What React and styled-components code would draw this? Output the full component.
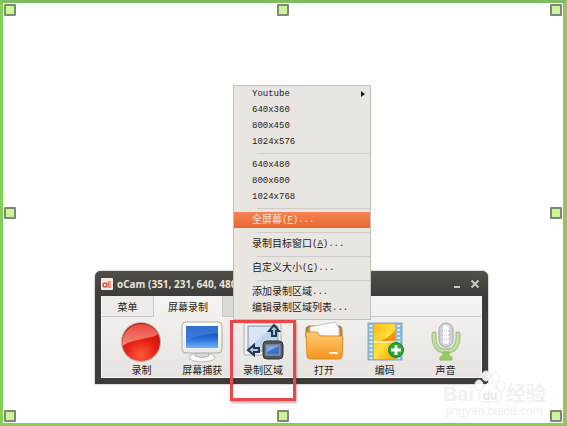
import styled, { createGlobalStyle, css } from "styled-components";

const menuGroups = [
  {
    items: [
      { size: "Youtube", submenu: true },
      { size: "640x360" },
      { size: "800x450" },
      { size: "1024x576" },
    ],
  },
  { items: [{ size: "640x480" }, { size: "800x600" }, { size: "1024x768" }] },
  { items: [{ label: "全屏幕", hotkey: "F", active: true }] },
  { loose: true, items: [{ label: "录制目标窗口", hotkey: "A" }] },
  { loose: true, items: [{ label: "自定义大小", hotkey: "C" }] },
  {
    loose: true,
    items: [{ label: "添加录制区域" }, { label: "编辑录制区域列表" }],
  },
];

const RecordIcon = () => (
  <svg width="42" height="42" viewBox="0 0 42 42">
    <defs>
      <radialGradient id="rec" cx="50%" cy="85%" r="75%">
        <stop offset="0" stopColor="#ff5a38" />
        <stop offset="0.6" stopColor="#e41c12" />
        <stop offset="1" stopColor="#c01410" />
      </radialGradient>
      <linearGradient id="recShine" x1="0" y1="0" x2="0" y2="1">
        <stop offset="0" stopColor="#e84a3e" />
        <stop offset="1" stopColor="#f58a7c" />
      </linearGradient>
    </defs>
    <circle cx="21" cy="21" r="20" fill="#b4b0ac" />
    <circle cx="21" cy="21" r="19" fill="url(#rec)" />
    <path
      d="M2.500 25 A19 19 0 0 1 38 13 C33 17 28 16 22 18 C13 20 8 21 2.500 25Z"
      fill="url(#recShine)"
    />
  </svg>
);

const ScreenIcon = () => (
  <svg width="42" height="42" viewBox="0 0 42 42">
    <defs>
      <linearGradient id="scr" x1="0" y1="0" x2="0" y2="1">
        <stop offset="0" stopColor="#1d57ba" />
        <stop offset="0.5" stopColor="#1d62d0" />
        <stop offset="1" stopColor="#6fb2f6" />
      </linearGradient>
      <linearGradient id="scrFrame" x1="0" y1="0" x2="0" y2="1">
        <stop offset="0" stopColor="#ffffff" />
        <stop offset="1" stopColor="#e8e8e6" />
      </linearGradient>
    </defs>
    <ellipse cx="21" cy="36.500" rx="13" ry="4.500" fill="#f8f8f6" stroke="#bcbdba" />
    <path d="M15 30h12l1 5q-7 3-14 0z" fill="#d8d9d6" stroke="#b4b5b2" />
    <rect x="1" y="1" width="40" height="31" rx="4" fill="url(#scrFrame)" stroke="#a9aaa8" />
    <rect x="5" y="5" width="32" height="22" fill="url(#scr)" />
    <path d="M5 5h32v7q-15 1-32 7z" fill="#6fa5ee" opacity="0.3" />
  </svg>
);

const RegionIcon = () => (
  <svg width="42" height="42" viewBox="0 0 42 42">
    <rect x="2" y="2" width="37" height="32" rx="2" fill="#f1f1ef" stroke="#aeb0b0" />
    <rect x="6" y="5" width="30" height="25" fill="#c0d4ea" stroke="#8e9db0" />
    <path d="M7 6h24L7 26z" fill="#dae6f3" />
    <path
      d="M32 4l5 6h-3v5h-4v-5h-3z"
      fill="#a9c9ea"
      stroke="#22384e"
      strokeWidth="2"
    />
    <path
      d="M6 29l6-5v3h5v4h-5v3z"
      fill="#a9c9ea"
      stroke="#22384e"
      strokeWidth="2"
    />
    <rect x="21" y="20" width="20" height="18" rx="4" fill="#54575a" stroke="#303336" />
    <rect x="24" y="24" width="14" height="10" fill="#3c73c8" stroke="#a2aab2" />
    <path d="M25 25h12l-12 6z" fill="#7ea8e4" />
  </svg>
);

const FolderIcon = () => (
  <svg width="42" height="42" viewBox="0 0 42 42">
    <defs>
      <linearGradient id="fold" x1="0" y1="0" x2="0" y2="1">
        <stop offset="0" stopColor="#ffcb74" />
        <stop offset="1" stopColor="#f6961d" />
      </linearGradient>
    </defs>
    <path d="M3 9q0-4 3-4h30q3 0 3 4v7H3z" fill="#c08a44" stroke="#a9752f" />
    <path d="M7 14V6l25-5 4 6v9z" fill="#fbfbfb" stroke="#c5c5c3" />
    <path
      d="M3 12q0-1 1-1h10l3 4h21q2 0 2 2l-1 18q0 3-3 3H7q-3 0-3-3z"
      fill="url(#fold)"
      stroke="#d98d2b"
    />
    <path d="M26 31h9v2h-9z" fill="#fff3da" />
  </svg>
);

const FilmIcon = () => (
  <svg width="42" height="42" viewBox="0 0 42 42">
    <defs>
      <linearGradient id="film" x1="0" y1="0" x2="1" y2="1">
        <stop offset="0" stopColor="#ffb90f" />
        <stop offset="0.5" stopColor="#ffe03c" />
        <stop offset="1" stopColor="#f9a00c" />
      </linearGradient>
    </defs>
    <rect x="4" y="2" width="34" height="37" fill="#8fb8d9" stroke="#86a8c4" />
    <rect x="10" y="3" width="21" height="35" fill="url(#film)" />
    <path d="M31 10v10H14q10-2 17-10z" fill="#f98f13" />
    <path d="M10 20h21v2H10z" fill="#fff2a0" />
    <path d="M7 4v34M34.500 4v34" stroke="#d4e8f6" strokeWidth="3" strokeDasharray="2 2" />
    <circle cx="32" cy="29" r="7.500" fill="#27a632" stroke="#168322" />
    <path d="M32 24v10M27 29h10" stroke="#ffffff" strokeWidth="3" />
  </svg>
);

const MicIcon = () => (
  <svg width="42" height="42" viewBox="0 0 42 42">
    <path
      d="M9 13q-1 17 12 17t12-17"
      fill="none"
      stroke="#9fba88"
      strokeWidth="5"
      strokeLinecap="round"
    />
    <path
      d="M9 13q-1 17 12 17t12-17"
      fill="none"
      stroke="#c0e09e"
      strokeWidth="3"
      strokeLinecap="round"
    />
    <path d="M18 31h6v4l3 1v3H15v-3l3-1z" fill="#92cf5c" stroke="#8cba66" />
    <rect x="14" y="2" width="14" height="24" rx="7" fill="#d3d4da" stroke="#a4a5ad" />
    <rect x="18" y="4" width="6" height="19" rx="3" fill="#fbfbfd" />
    <path d="M15 10h12M15 14h12M15 18h12" stroke="#b9bbc3" strokeDasharray="1 1" />
  </svg>
);

const tools = [
  { label: "录制", icon: <RecordIcon /> },
  { label: "屏幕捕获", icon: <ScreenIcon /> },
  { label: "录制区域", icon: <RegionIcon /> },
  { label: "打开", icon: <FolderIcon /> },
  { label: "编码", icon: <FilmIcon /> },
  { label: "声音", icon: <MicIcon /> },
];

const RecorderWindow = () => {
  return (
    <Window>
      <TitleBar>
        <svg width="12" height="12" viewBox="0 0 12 12">
          <rect width="12" height="12" rx="1" fill="#f3ebe6" />
          <circle cx="4" cy="7" r="2" fill="none" stroke="#d5503f" strokeWidth="1.500" />
          <path d="M10 4H7.500v5H10M8 6.500h2" fill="none" stroke="#e07b62" strokeWidth="1.500" />
        </svg>
        <Title>oCam (351, 231, 640, 480)</Title>
        <WindowButton aria-label="minimize">
          <svg width="10" height="10" viewBox="0 0 10 10">
            <path d="M2 8h6" stroke="#c9c7c2" strokeWidth="2" />
          </svg>
        </WindowButton>
        <WindowButton aria-label="close">
          <svg width="10" height="10" viewBox="0 0 10 10">
            <path d="M1.500 1.500l7 7M8.500 1.500l-7 7" stroke="#c9c7c2" strokeWidth="2" />
          </svg>
        </WindowButton>
      </TitleBar>
      <WindowBody>
        <TabBar>
          <Tab>菜单</Tab>
          <Tab $active>屏幕录制</Tab>
          <Tab $dim />
          <TabFiller />
        </TabBar>
        <Toolbar>
          {tools.map((tool) => (
            <ToolButton key={tool.label}>
              {tool.icon}
              {tool.label}
            </ToolButton>
          ))}
        </Toolbar>
      </WindowBody>
    </Window>
  );
};

const RegionMenu = () => {
  return (
    <Menu>
      {menuGroups.map((group, i) => (
        <MenuGroup key={i}>
          {i > 0 && <Separator $loose={group.loose} />}
          {group.items.map((item) => (
            <MenuItem key={item.size || item.label} $active={item.active}>
              {item.label}
              <Latin>
                {item.size}
                {item.hotkey && (
                  <>
                    (<u>{item.hotkey}</u>)
                  </>
                )}
                {item.label && "..."}
              </Latin>
              {item.submenu && <Arrow />}
            </MenuItem>
          ))}
        </MenuGroup>
      ))}
    </Menu>
  );
};

const BaiduMark = () => {
  return (
    <Mark>
      <MarkLogo>
        <span>Bai</span>
        <Paw>
          <svg width="32" height="34" viewBox="0 0 32 34">
            <g fill="#ffffff" fillOpacity="0.9" stroke="#ececec">
              <ellipse cx="5" cy="15" rx="4" ry="5" />
              <ellipse cx="12" cy="6" rx="4" ry="5" />
              <ellipse cx="21" cy="7" rx="4" ry="5" />
              <ellipse cx="27" cy="16" rx="4" ry="5" />
              <path d="M16 13c5 0 6 5 9 8s3 11-3 11q-6-1-12 0c-6 0-7-7-3-11s4-8 9-8z" />
            </g>
          </svg>
          <PawText>du</PawText>
        </Paw>
        <span>经验</span>
      </MarkLogo>
      <MarkUrl>jingyan.baidu.com</MarkUrl>
    </Mark>
  );
};

const App = () => {
  return (
    <>
      <GlobalStyle />
      <CaptureRegion>
        <RecorderWindow />
        <RegionMenu />
        <Callout />
        <BaiduMark />
        <Handle $x="left" $y="top" />
        <Handle $x="center" $y="top" />
        <Handle $x="right" $y="top" />
        <Handle $x="left" $y="center" />
        <Handle $x="right" $y="center" />
        <Handle $x="left" $y="bottom" />
        <Handle $x="center" $y="bottom" />
        <Handle $x="right" $y="bottom" />
      </CaptureRegion>
    </>
  );
};

const GlobalStyle = createGlobalStyle`
  * {
    box-sizing: border-box;
  }
  body {
    margin: 0;
    background: #fefefe;
    font-family: "Liberation Sans", "Noto Sans CJK SC", sans-serif;
    font-size: 10px;
    color: #1c1b1a;
  }
  button {
    margin: 0;
    padding: 0;
    border: none;
    background: none;
    font: inherit;
    color: inherit;
  }
  svg {
    display: block;
    flex: none;
  }
`;
const CaptureRegion = styled.main`
  position: relative;
  width: 100%;
  min-height: 100vh;
  border: 3px solid #86cc55;
  border-top-color: #7fbb62;
  border-right-width: 4px;
  overflow: hidden;
`;
const Handle = styled.span`
  position: absolute;
  width: 12px;
  height: 12px;
  border: 2px solid #7f8878;
  border-radius: 1px;
  background: #cdf497;
  ${({ $x }) =>
    $x === "center"
      ? css`
          left: calc(50% - 6px);
        `
      : css`
          ${$x}: 1px;
        `}
  ${({ $y }) =>
    $y === "center"
      ? css`
          top: calc(50% - 6px);
        `
      : css`
          ${$y}: 1px;
        `}
`;
const Window = styled.section`
  position: absolute;
  top: 268px;
  left: 92px;
  width: 393px;
  padding: 0 6px 6px;
  border-radius: 6px 6px 0 0;
  background: #3d3c38;
  box-shadow: 0 0 2px rgba(0, 0, 0, 0.5);
`;
const TitleBar = styled.header`
  display: flex;
  align-items: center;
  gap: 4px;
  height: 25px;
  margin: 0 -6px;
  padding: 0 6px;
  border-radius: 6px 6px 0 0;
  background: linear-gradient(#504f4a, #3d3c38);
`;
const Title = styled.h1`
  flex: 1;
  margin: 0;
  font-family: "Open Sans", sans-serif;
  font-size: 10px;
  font-weight: bold;
  color: #e8e5de;
`;
const WindowButton = styled.button`
  display: flex;
  padding: 2px;
`;
const WindowBody = styled.div`
  border: 1px solid #faf9f8;
  border-top: none;
  background: linear-gradient(#f5f4f2, #e6e3df);
`;
const TabBar = styled.div`
  display: flex;
  height: 21px;
`;
const Tab = styled.button`
  min-width: 52px;
  padding: 0 14px;
  border-right: 1px solid #cbc8c3;
  border-bottom: 1px solid ${({ $active }) => ($active ? "transparent" : "#cbc8c3")};
  background: ${({ $active, $dim }) =>
    $active ? "transparent" : $dim ? "#dcd9d5" : "#eeebe8"};
`;
const TabFiller = styled.div`
  flex: 1;
  border-bottom: 1px solid #cbc8c3;
`;
const Toolbar = styled.div`
  display: flex;
  height: 60px;
  padding: 4px 5px 0 9px;
`;
const ToolButton = styled.button`
  display: flex;
  flex: 1;
  flex-direction: column;
  align-items: center;
  gap: 1px;
  line-height: 14px;
`;
const Menu = styled.nav`
  position: absolute;
  top: 82px;
  left: 230px;
  width: 138px;
  padding-bottom: 3px;
  border: 1px solid #c2bfba;
  background: #e9e6e2;
  line-height: 16px;
`;
const MenuGroup = styled.div`
  display: flex;
  flex-direction: column;
`;
const MenuItem = styled.button`
  display: flex;
  align-items: center;
  height: 16px;
  padding: 0 5px 0 18px;
  text-align: left;
  ${({ $active }) =>
    $active &&
    css`
      background: linear-gradient(#f58453, #e8672f);
      color: #fbe3d6;
    `}
`;
const Latin = styled.span`
  flex: 1;
  font-family: "Liberation Mono", monospace;
  font-size: 9px;
`;
const Arrow = styled.span`
  border: 3px solid transparent;
  border-left: 4px solid #1c1b1a;
  border-right: none;
`;
const Separator = styled.div`
  display: flex;
  align-items: center;
  height: ${({ $loose }) => ($loose ? "8px" : "7px")};
  padding-left: 23px;
  &::after {
    content: "";
    flex: 1;
    height: 1px;
    background: #cfccc7;
  }
`;
const Callout = styled.div`
  position: absolute;
  top: 317px;
  left: 227px;
  width: 66px;
  height: 81px;
  border: 3px solid #e8484c;
  box-shadow: 1px 2px 2px rgba(120, 60, 60, 0.4);
`;
const Mark = styled.div`
  position: absolute;
  right: 17px;
  bottom: 5px;
  display: flex;
  flex-direction: column;
  align-items: center;
`;
const MarkLogo = styled.div`
  display: flex;
  align-items: flex-end;
  font-size: 20px;
  font-weight: bold;
  line-height: 20px;
  color: #f1f1f1;
`;
const Paw = styled.div`
  position: relative;
`;
const PawText = styled.span`
  position: absolute;
  bottom: 1px;
  left: 0;
  width: 100%;
  font-size: 12px;
  line-height: 14px;
  text-align: center;
  color: #e6e6e6;
`;
const MarkUrl = styled.div`
  font-size: 12px;
  line-height: 14px;
  color: #f1f1f1;
`;

export default App;
